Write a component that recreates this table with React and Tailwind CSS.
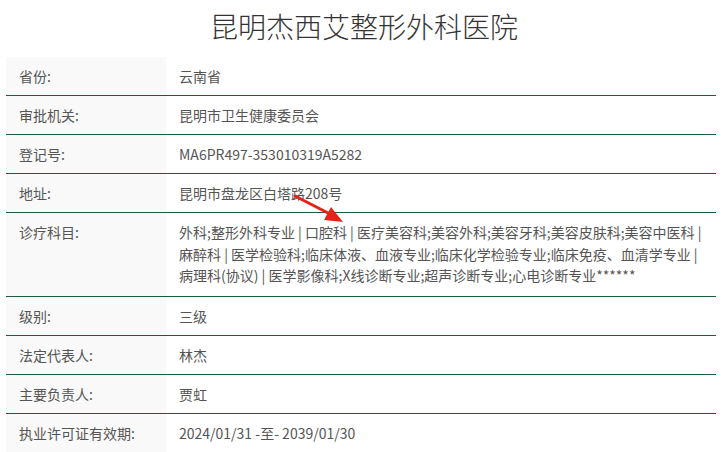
import React from 'react';

const rows = [
  { label: '省份:', value: '云南省' },
  { label: '审批机关:', value: '昆明市卫生健康委员会' },
  { label: '登记号:', value: 'MA6PR497-353010319A5282' },
  { label: '地址:', value: '昆明市盘龙区白塔路208号' },
  {
    label: '诊疗科目:',
    lines: [
      '外科;整形外科专业 | 口腔科 | 医疗美容科;美容外科;美容牙科;美容皮肤科;美容中医科 |',
      '麻醉科 | 医学检验科;临床体液、血液专业;临床化学检验专业;临床免疫、血清学专业 |',
      '病理科(协议) | 医学影像科;X线诊断专业;超声诊断专业;心电诊断专业******',
    ],
  },
  { label: '级别:', value: '三级' },
  { label: '法定代表人:', value: '林杰' },
  { label: '主要负责人:', value: '贾虹' },
  { label: '执业许可证有效期:', value: '2024/01/31 -至- 2039/01/30' },
];

// red annotation arrow drawn over the table
const Arrow = () => (
  <svg className="absolute left-0 top-0 pointer-events-none" width="728" height="452">
    <line x1="295" y1="196" x2="332" y2="215" stroke="#e5231b" strokeWidth="3" strokeLinecap="round" />
    <polygon points="343,222 324,220 331,207" fill="#e5231b" />
  </svg>
);

const App = () => {
  return (
    <div
      className="relative w-[728px] h-[452px] overflow-hidden bg-white text-[#555]"
      style={{ fontFamily: '"Microsoft YaHei", "Noto Sans CJK SC", sans-serif' }}
    >
      <h1 className="text-center text-[28px] leading-[36px] pt-[8px] h-[57px] text-[#333] font-light">
        昆明杰西艾整形外科医院
      </h1>
      <div className="mx-[6px] w-[710px]">
        {rows.map((r) => (
          <div key={r.label} className="flex border-b border-[#1e5a3e] text-[14px]">
            <div className="w-[160px] shrink-0 bg-[#f9f9f9] pl-[13px] flex items-start pt-[8px] leading-[22px] min-h-[38px]">
              {r.label}
            </div>
            {r.lines ? (
              <div className="flex-1 pl-[13px] py-[9px] leading-[21.5px] whitespace-nowrap">
                {r.lines.map((l) => (
                  <div key={l}>{l}</div>
                ))}
              </div>
            ) : (
              <div className="flex-1 pl-[13px] pt-[8px] leading-[22px] min-h-[38px]">{r.value}</div>
            )}
          </div>
        ))}
      </div>
      <Arrow />
    </div>
  );
};

export default App;
